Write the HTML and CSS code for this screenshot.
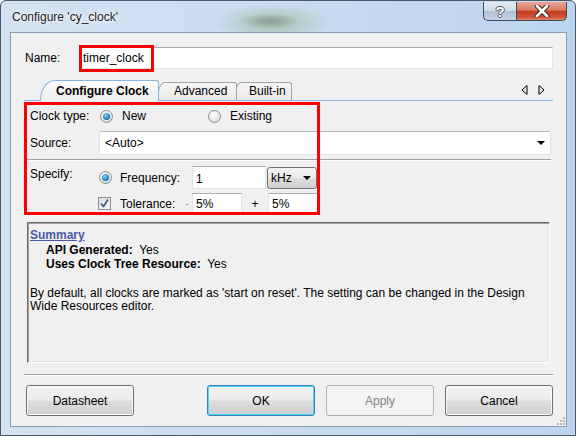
FILE: index.html
```html
<!DOCTYPE html>
<html lang="en">
<head>
    <meta charset="UTF-8">
    <title>Configure 'cy_clock'</title>
    <link rel="stylesheet" href="styles.css">
</head>
<body>
    <div class="window">
        <div class="titlebar">
            <span class="title">Configure 'cy_clock'</span>
            <div class="caption">
                <span class="cap-btn help">?</span>
                <span class="cap-btn close">
                    <svg width="16" height="12" viewBox="0 0 16 12">
                        <path d="M3 1 L13 11 M13 1 L3 11" stroke="#3b2a26" stroke-width="4.6" stroke-linecap="round"/>
                        <path d="M3 1 L13 11 M13 1 L3 11" stroke="#ffffff" stroke-width="2.6" stroke-linecap="round"/>
                    </svg>
                </span>
            </div>
        </div>

        <div class="client">
            <div class="name-row">
                <span class="lbl name-lbl">Name:</span>
                <div class="textbox name-box">timer_clock</div>
                <span class="mark mark-name"></span>
            </div>

            <div class="tabstrip">
                <div class="tab active">Configure Clock</div>
                <div class="tab tab-adv">Advanced</div>
                <div class="tab tab-built">Built-in</div>
                <div class="tab-arrows">
                    <svg width="24" height="10" viewBox="0 0 24 10">
                        <path d="M6 0.5 L1 5 L6 9.5 Z" fill="none" stroke="#000" stroke-width="1"/>
                        <path d="M18 0.5 L23 5 L18 9.5 Z" fill="none" stroke="#000" stroke-width="1"/>
                    </svg>
                </div>
            </div>

            <div class="page">
                <span class="mark mark-clock"></span>

                <div class="row clock-row">
                    <span class="lbl">Clock type:</span>
                    <span class="radio radio-new checked"></span>
                    <span class="opt">New</span>
                    <span class="radio radio-existing"></span>
                    <span class="opt">Existing</span>
                </div>

                <div class="row source-row">
                    <span class="lbl">Source:</span>
                    <div class="combo source-combo">
                        <span>&lt;Auto&gt;</span>
                        <span class="arrow"></span>
                    </div>
                </div>

                <div class="etched page-sep"></div>

                <div class="specify">
                    <span class="lbl specify-lbl">Specify:</span>
                    <div class="specify-rows">
                        <div class="freq-row">
                            <span class="radio checked"></span>
                            <span class="opt freq-lbl">Frequency:</span>
                            <div class="textbox freq-box">1</div>
                            <div class="unit-combo">
                                <span>kHz</span>
                                <span class="arrow"></span>
                            </div>
                        </div>
                        <div class="tol-row">
                            <span class="check">
                                <svg width="11" height="11" viewBox="0 0 11 11">
                                    <path d="M2 5.5 L4.5 8.5 L9 1.5" fill="none" stroke="#3f5588" stroke-width="1.6"/>
                                </svg>
                            </span>
                            <span class="opt tol-lbl">Tolerance:</span>
                            <span class="sign minus">&middot;</span>
                            <div class="textbox tol-box">5%</div>
                            <span class="sign plus">+</span>
                            <div class="textbox tol-box">5%</div>
                        </div>
                    </div>
                </div>

                <div class="summary">
                    <div class="sum-title">Summary</div>
                    <div class="sum-item"><b>API Generated:</b>&nbsp; Yes</div>
                    <div class="sum-item"><b>Uses Clock Tree Resource:</b>&nbsp; Yes</div>
                    <p class="sum-note">By default, all clocks are marked as 'start on reset'. The setting can be changed in the Design<br>Wide Resources editor.</p>
                </div>
            </div>

            <div class="etched bottom-sep"></div>

            <div class="buttons">
                <button class="btn">Datasheet</button>
                <button class="btn default ok">OK</button>
                <button class="btn" disabled>Apply</button>
                <button class="btn">Cancel</button>
            </div>

            <svg class="grip" width="10" height="10" viewBox="0 0 10 10">
                <g fill="#b9b9b9">
                    <rect x="8" y="2" width="2" height="2"/>
                    <rect x="5" y="5" width="2" height="2"/>
                    <rect x="8" y="5" width="2" height="2"/>
                    <rect x="2" y="8" width="2" height="2"/>
                    <rect x="5" y="8" width="2" height="2"/>
                    <rect x="8" y="8" width="2" height="2"/>
                </g>
            </svg>
        </div>
    </div>
</body>
</html>
```

FILE: styles.css
```css
body {
    margin: 0;
    font-family: "Liberation Sans", Arial, sans-serif;
    font-size: 12px;
    color: #000;
    background: #ffffff;
}
.window {
    width: 576px;
    height: 436px;
    box-sizing: border-box;
    border: 1px solid #4a586a;
    border-radius: 6px 6px 0 0;
    padding: 0 8px 8px 9px;
    display: flex;
    flex-direction: column;
    background:
        radial-gradient(ellipse 30px 8px at 268px 20px, rgba(80, 90, 80, 0.35), rgba(80, 90, 80, 0)),
        radial-gradient(ellipse 60px 20px at 272px 22px, rgba(140, 175, 130, 0.6), rgba(140, 175, 130, 0)),
        linear-gradient(90deg, #d2e2f2 0%, #c8dcf1 55%, #bcd5ee 100%);
}

/* title bar */
.titlebar {
    height: 31px;
    display: flex;
    align-items: flex-start;
}
.title {
    padding: 8px 0 0 2px;
    line-height: 16px;
    color: #1b1b1b;
    text-shadow: 0 0 6px #ffffff, 0 0 3px #ffffff;
}
.caption {
    margin-left: auto;
    display: flex;
    margin-top: 1px;
}
.cap-btn {
    height: 19px;
    box-sizing: border-box;
    display: flex;
    align-items: center;
    justify-content: center;
    border: 1px solid #3e4c5e;
    border-top: none;
}
.help {
    width: 33px;
    border-radius: 0 0 0 5px;
    border-right: none;
    background: linear-gradient(180deg, #e4ecf5 0%, #cfdbe8 48%, #b1c1d4 52%, #c4d4e5 100%);
    color: #fff;
    font-weight: bold;
    font-size: 15px;
    text-shadow: -1px 0 #4a5666, 1px 0 #4a5666, 0 -1px #4a5666, 0 1px #4a5666;
}
.close {
    width: 51px;
    border-radius: 0 0 5px 0;
    background: linear-gradient(180deg, #e9a898 0%, #d9775f 45%, #c23d20 52%, #d2533a 85%, #e28a6a 100%);
}

/* client area */
.client {
    flex: 1;
    position: relative;
    border: 1px solid #8a9db3;
    background: #f0f0f0;
    display: flex;
    flex-direction: column;
}
.lbl {
    display: inline-block;
    width: 69px;
    flex-shrink: 0;
}
.textbox {
    box-sizing: border-box;
    height: 22px;
    background: #fff;
    border: 1px solid #e2e3ea;
    border-top-color: #abadb3;
    padding: 0 3px;
    line-height: 20px;
}
.mark {
    position: absolute;
    box-sizing: border-box;
    border: 3px solid #ff0000;
    pointer-events: none;
    z-index: 5;
}

.name-row {
    position: relative;
    display: flex;
    align-items: center;
    padding: 14px 0 0 14px;
}
.name-lbl {
    width: 55px;
}
.name-box {
    width: 473px;
    padding-left: 2px;
}
.mark-name {
    left: 68px;
    top: 12px;
    width: 75px;
    height: 27px;
}

/* tabs */
.tabstrip {
    position: relative;
    display: flex;
    align-items: flex-end;
    height: 20px;
    margin: 11px 13px 0 13px;
    padding-left: 16px;
    border-bottom: 1px solid #86b2e4;
}
.tab {
    box-sizing: border-box;
    height: 18px;
    border: 1px solid #a3a3a3;
    border-bottom: none;
    border-radius: 8px 3px 0 0 / 16px 3px 0 0;
    background: linear-gradient(180deg, #f7f7f7, #e8e8e8);
    line-height: 17px;
    position: relative;
}
.tab.active {
    width: 119px;
    height: 21px;
    margin-bottom: -1px;
    padding-left: 15px;
    font-weight: bold;
    border-color: #86b2e4;
    border-radius: 15px 3px 0 0 / 20px 3px 0 0;
    background: linear-gradient(180deg, #ffffff, #f0f0f0 60%);
    line-height: 20px;
    z-index: 2;
}
.tab-adv {
    width: 80px;
    margin-left: -2px;
    padding-left: 16px;
    z-index: 1;
}
.tab-built {
    width: 58px;
    margin-left: -3px;
    padding-left: 14px;
}
.tab-arrows {
    margin-left: auto;
    margin-right: 8px;
    align-self: center;
    display: flex;
}

/* tab page */
.page {
    position: relative;
}
.mark-clock {
    left: 13px;
    top: 1px;
    width: 296px;
    height: 113px;
}
.row {
    display: flex;
    align-items: center;
    padding-left: 19px;
}
.clock-row {
    margin-top: 3px;
    height: 24px;
}
.source-row {
    margin-top: 3px;
    height: 24px;
}
.radio {
    box-sizing: border-box;
    width: 13px;
    height: 13px;
    border-radius: 50%;
    border: 1px solid #8e8f8f;
    background: radial-gradient(circle at 40% 35%, #ffffff, #e4e4e4 60%, #cfcfcf);
    display: flex;
    align-items: center;
    justify-content: center;
    flex-shrink: 0;
}
.radio.checked::after {
    content: "";
    width: 7px;
    height: 7px;
    border-radius: 50%;
    background: radial-gradient(circle at 40% 35%, #8ad4ff, #2a86c8 55%, #104f80);
}
.radio-new {
    margin-left: 1px;
}
.opt {
    margin-left: 9px;
}
.radio-existing {
    margin-left: 62px;
}
.combo {
    box-sizing: border-box;
    display: flex;
    align-items: center;
    background: #fff;
    border: 1px solid #dfe3e8;
    border-top-color: #b5b9bf;
    border-radius: 2px;
}
.source-combo {
    width: 452px;
    height: 24px;
    padding: 0 5px 0 5px;
}
.arrow {
    margin-left: auto;
    width: 0;
    height: 0;
    border-left: 4px solid transparent;
    border-right: 4px solid transparent;
    border-top: 4px solid #000;
}
.etched {
    height: 1px;
    border-top: 1px solid #a0a0a0;
    background: #fff;
}
.page-sep {
    margin: 4px 15px 0 16px;
}

.specify {
    display: flex;
    padding-left: 19px;
    margin-top: 5px;
}
.specify-lbl {
    line-height: 16px;
}
.freq-row {
    display: flex;
    align-items: center;
    height: 23px;
}
.freq-lbl {
    width: 72px;
    margin-left: 8px;
}
.freq-box {
    width: 74px;
    height: 23px;
    line-height: 22px;
    padding-top: 1px;
}
.unit-combo {
    box-sizing: border-box;
    width: 50px;
    height: 22px;
    margin-left: 1px;
    padding: 0 5px 0 3px;
    display: flex;
    align-items: center;
    border: 1px solid #707070;
    border-radius: 3px;
    background: linear-gradient(180deg, #f2f2f2 0%, #ebebeb 48%, #dddddd 52%, #cfcfcf 100%);
}
.tol-row {
    display: flex;
    align-items: center;
    height: 21px;
    margin-top: 4px;
}
.check {
    box-sizing: border-box;
    width: 13px;
    height: 13px;
    margin-left: -1px;
    border: 1px solid #8e8f8f;
    background: linear-gradient(135deg, #dcdcdc, #f6f6f6);
    display: flex;
    align-items: center;
    justify-content: center;
}
.tol-lbl {
    width: 62px;
    margin-left: 9px;
}
.sign {
    text-align: center;
}
.minus {
    width: 10px;
    font-size: 9px;
}
.plus {
    width: 26px;
}
.tol-box {
    width: 50px;
    height: 21px;
    line-height: 20px;
}

.summary {
    box-sizing: border-box;
    height: 141px;
    margin: 8px 16px 0 16px;
    padding: 5px 2px 0 2px;
    border: 1px solid;
    border-color: #696969 #ffffff #ffffff #696969;
    box-shadow: inset 1px 1px #a0a0a0, inset -1px -1px #e3e3e3;
    line-height: 14.5px;
}
.sum-title {
    color: #4b58a6;
    font-weight: bold;
    text-decoration: underline;
}
.sum-item {
    padding-left: 16px;
}
.sum-note {
    margin: 15px 0 0 0;
    line-height: 13.5px;
}

.bottom-sep {
    margin: 11px 13px 0 13px;
}

/* dialog buttons */
.buttons {
    display: flex;
    gap: 11px;
    margin-top: 9px;
    padding: 0 13px 0 15px;
}
.btn {
    width: 108px;
    height: 31px;
    font-family: inherit;
    font-size: 12px;
    color: #000;
    border: 1px solid #707070;
    border-radius: 3px;
    background: linear-gradient(180deg, #f2f2f2 0%, #ebebeb 48%, #dddddd 52%, #cfcfcf 100%);
    box-shadow: inset 0 0 0 1px #fbfbfb;
}
.btn.default {
    border-color: #3c7fb1;
    box-shadow: inset 0 0 0 1px #48d8fb;
}
.ok {
    margin-left: auto;
}
.btn:disabled {
    color: #838383;
    border-color: #adb2b5;
    background: #f4f4f4;
    box-shadow: none;
}
.grip {
    position: absolute;
    right: 1px;
    bottom: 1px;
}
```
